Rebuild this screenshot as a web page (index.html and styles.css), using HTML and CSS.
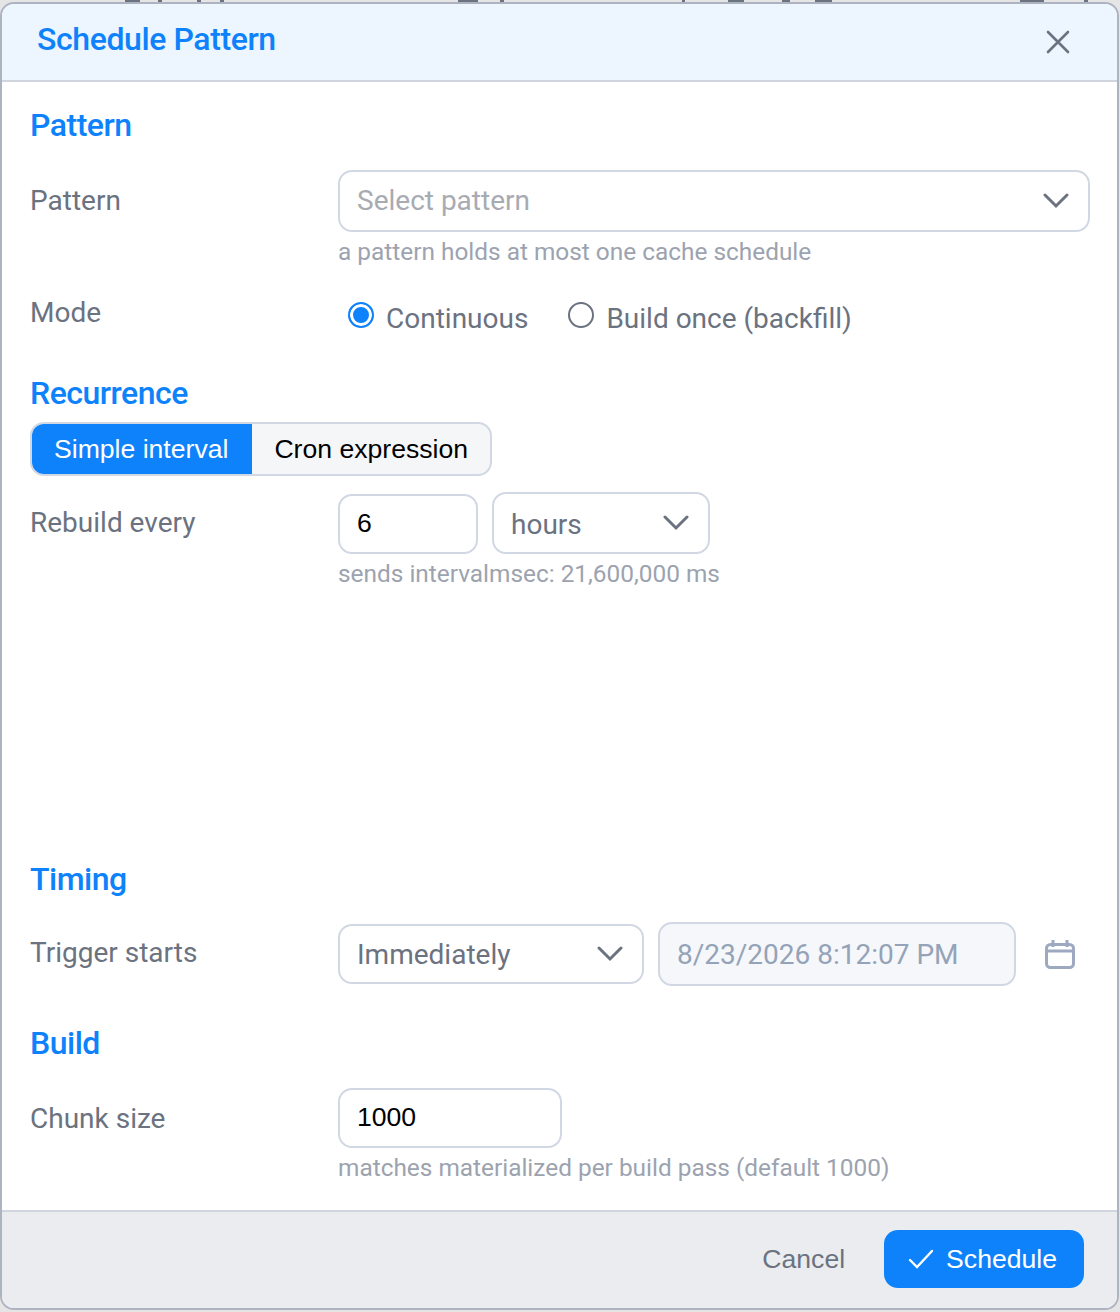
FILE: index.html
```html
<!DOCTYPE html>
<html lang="en">
<head>
    <meta charset="UTF-8">
    <meta name="viewport" content="width=device-width, initial-scale=1.0">
    <title>Schedule Pattern</title>
    <link rel="stylesheet" href="styles.css">
</head>
<body>
    <div class="dialog">
        <div class="dialog-header">
            <h1>Schedule Pattern</h1>
            <button class="close-btn" aria-label="Close">
                <svg width="24" height="24" viewBox="0 0 24 24"><path d="M2 2L22 22M22 2L2 22" stroke="#6b7280" stroke-width="2.6" fill="none" stroke-linecap="round"/></svg>
            </button>
        </div>

        <div class="dialog-body">
            <h2 class="section-title">Pattern</h2>
            <div class="row row-pattern">
                <label class="row-label">Pattern</label>
                <div class="row-field">
                    <div class="select select-full">
                        <span class="placeholder">Select pattern</span>
                        <svg class="chevron" width="26" height="16" viewBox="0 0 26 16"><path d="M2 2L13 13L24 2" stroke="#6b7280" stroke-width="3" fill="none" stroke-linecap="round"/></svg>
                    </div>
                    <p class="hint">a pattern holds at most one cache schedule</p>
                </div>
            </div>
            <div class="row row-mode">
                <label class="row-label">Mode</label>
                <div class="radios">
                    <span class="radio radio-on"></span>
                    <span class="radio-text">Continuous</span>
                    <span class="radio"></span>
                    <span class="radio-text">Build once (backfill)</span>
                </div>
            </div>

            <h2 class="section-title recurrence-title">Recurrence</h2>
            <div class="toggle">
                <span class="toggle-item toggle-active">Simple interval</span>
                <span class="toggle-item">Cron expression</span>
            </div>
            <div class="row row-rebuild">
                <label class="row-label">Rebuild every</label>
                <div class="row-field">
                    <div class="inline-fields inline-bottom">
                        <div class="input input-small">6</div>
                        <div class="select select-unit">
                            <span class="select-value">hours</span>
                            <svg class="chevron" width="26" height="16" viewBox="0 0 26 16"><path d="M2 2L13 13L24 2" stroke="#6b7280" stroke-width="3" fill="none" stroke-linecap="round"/></svg>
                        </div>
                    </div>
                    <p class="hint">sends intervalmsec: 21,600,000 ms</p>
                </div>
            </div>

            <h2 class="section-title timing-title">Timing</h2>
            <div class="row row-timing">
                <label class="row-label">Trigger starts</label>
                <div class="inline-fields">
                    <div class="select select-trigger">
                        <span class="select-value">Immediately</span>
                        <svg class="chevron" width="26" height="16" viewBox="0 0 26 16"><path d="M2 2L13 13L24 2" stroke="#6b7280" stroke-width="3" fill="none" stroke-linecap="round"/></svg>
                    </div>
                    <div class="date-input">8/23/2026 8:12:07 PM</div>
                    <svg class="calendar" width="30" height="29" viewBox="0 0 30 29" fill="none" stroke="#9ca9c0" stroke-width="3"><rect x="1.5" y="4.5" width="27" height="23" rx="4"/><path d="M2 11H28M8 0V7M22 0V7"/></svg>
                </div>
            </div>

            <h2 class="section-title build-title">Build</h2>
            <div class="row row-build">
                <label class="row-label">Chunk size</label>
                <div class="row-field">
                    <div class="input input-chunk">1000</div>
                    <p class="hint">matches materialized per build pass (default 1000)</p>
                </div>
            </div>
        </div>

        <div class="dialog-footer">
            <button class="btn-cancel">Cancel</button>
            <button class="btn-primary">
                <svg width="26" height="20" viewBox="0 0 26 20"><path d="M2 11L9 18L24 2" stroke="#fff" stroke-width="2.4" fill="none" stroke-linecap="round"/></svg>
                Schedule
            </button>
        </div>
    </div>
</body>
</html>
```

FILE: styles.css
```css
* {
    box-sizing: border-box;
}

html, body {
    height: 100%;
}

body {
    margin: 0;
    padding: 2px 1px 2px 0;
    background-color: #e5e5e5;
    /* bottoms of the table text left showing above the dialog */
    background-image: linear-gradient(90deg,
        transparent 125px, #6b7280 125px, #6b7280 140px, transparent 140px,
        transparent 158px, #6b7280 158px, #6b7280 162px, transparent 162px,
        transparent 197px, #6b7280 197px, #6b7280 201px, transparent 201px,
        transparent 220px, #6b7280 220px, #6b7280 224px, transparent 224px,
        transparent 458px, #6b7280 458px, #6b7280 478px, transparent 478px,
        transparent 500px, #6b7280 500px, #6b7280 504px, transparent 504px,
        transparent 682px, #6b7280 682px, #6b7280 685px, transparent 685px,
        transparent 728px, #6b7280 728px, #6b7280 744px, transparent 744px,
        transparent 782px, #6b7280 782px, #6b7280 790px, transparent 790px,
        transparent 815px, #6b7280 815px, #6b7280 832px, transparent 832px,
        transparent 1020px, #6b7280 1020px, #6b7280 1044px, transparent 1044px,
        transparent 1084px, #6b7280 1084px, #6b7280 1088px, transparent 1088px);
    background-size: 100% 2px;
    background-repeat: no-repeat;
    font-family: Roboto, sans-serif;
    overflow: hidden;
}

.dialog {
    height: 100%;
    display: flex;
    flex-direction: column;
    background: white;
    border: 2px solid #adb3c0;
    border-radius: 14px;
    overflow: hidden;
}

.dialog-header {
    height: 78px;
    flex: none;
    display: flex;
    align-items: center;
    justify-content: space-between;
    padding: 0 47px 0 35px;
    background-color: #edf5ff;
    border-bottom: 2px solid #d1d5e0;
}

.dialog-header h1 {
    margin: 0 0 6px;
    font-size: 32px;
    font-weight: 500;
    letter-spacing: -0.4px;
    color: #0d82fb;
}

.close-btn {
    display: flex;
    padding: 0;
    border: none;
    background: none;
}

.dialog-body {
    flex: 1;
    padding: 0 28px;
}

.section-title {
    margin: 0;
    padding-top: 24px;
    font-size: 32px;
    line-height: 38px;
    font-weight: 500;
    letter-spacing: -0.5px;
    color: #0d82fb;
}

.recurrence-title {
    padding-top: 0;
    margin-top: 36px;
}

.timing-title {
    padding-top: 0;
    margin-top: 269px;
}

.build-title {
    padding-top: 0;
    margin-top: 38px;
}

.row {
    display: flex;
    align-items: flex-start;
}

.row-label {
    flex: none;
    width: 308px;
    font-size: 28px;
    line-height: 32px;
    color: #6b7280;
}

.row-pattern {
    margin-top: 26px;
}

.row-pattern .row-label {
    margin-top: 15px;
}

.row-field {
    flex: 1;
}

.select,
.input,
.date-input {
    display: flex;
    align-items: center;
    justify-content: space-between;
    height: 60px;
    border: 2px solid #d1d8e4;
    border-radius: 14px;
    background: white;
    font-size: 28px;
}

.select {
    padding: 0 19px 0 17px;
    color: #6b7280;
}

.select-full {
    width: 752px;
    height: 62px;
}

.placeholder {
    color: #a8abb2;
    margin-bottom: 2px;
}

.hint {
    margin: 3px 0 0;
    font-size: 24.4px;
    line-height: 34px;
    color: #9ca3af;
}

.row-mode {
    margin-top: 25px;
}

.row-mode .row-label {
    margin-top: 3px;
}

.radios {
    display: flex;
    align-items: center;
    margin-top: 4px;
    padding-left: 10px;
    height: 40px;
    font-size: 28px;
    color: #6b7280;
}

.radio {
    width: 26px;
    height: 26px;
    margin-top: -6px;
    border: 2px solid #6b7280;
    border-radius: 50%;
    background: white;
}

.radio-on {
    border-color: #0d82fb;
    background: #0d82fb;
    box-shadow: inset 0 0 0 3px white;
}

.radio-text {
    margin-left: 12px;
    margin-right: 40px;
}

.toggle {
    display: inline-flex;
    margin-top: 10px;
    height: 54px;
    border: 2px solid #d1d8e4;
    border-radius: 14px;
    overflow: hidden;
    background-color: #f5f6f8;
    font-family: "Liberation Sans", Arial, sans-serif;
    font-size: 26.6px;
    color: black;
}

.toggle-item {
    display: flex;
    align-items: center;
    padding: 0 22px;
}

.toggle-active {
    padding-right: 24px;
    background-color: #0d82fb;
    color: white;
}

.row-rebuild {
    margin-top: 16px;
}

.row-rebuild .row-label {
    margin-top: 15px;
}

.inline-fields {
    display: flex;
    align-items: center;
    gap: 14px;
}

.inline-bottom {
    align-items: flex-end;
}

.input {
    justify-content: flex-start;
    padding: 0 17px 2px;
    font-family: "Liberation Sans", Arial, sans-serif;
    font-size: 26.6px;
    color: black;
}

.input-small {
    width: 140px;
}

.select-unit {
    width: 218px;
    height: 62px;
}

.select-unit .select-value {
    margin-top: 2px;
}

.row-timing {
    margin-top: 24px;
    align-items: center;
}

.row-timing .row-label {
    margin-bottom: 2px;
}

.select-trigger {
    width: 306px;
}

.date-input {
    width: 358px;
    height: 64px;
    padding: 0 17px;
    background-color: #f5f7fa;
    color: #94a3b8;
}

.calendar {
    margin-left: 15px;
}

.row-build {
    margin-top: 26px;
}

.row-build .row-label {
    margin-top: 15px;
}

.input-chunk {
    width: 224px;
}

.dialog-footer {
    height: 98px;
    flex: none;
    display: flex;
    align-items: center;
    justify-content: flex-end;
    gap: 39px;
    padding: 0 33px 2px 0;
    background-color: #ebecf0;
    border-top: 2px solid #d1d5e0;
}

.btn-cancel,
.btn-primary {
    border: none;
    font-family: "Liberation Sans", Arial, sans-serif;
    font-size: 26.6px;
}

.btn-cancel {
    padding: 0;
    background: none;
    color: #6b7280;
}

.btn-primary {
    display: flex;
    align-items: center;
    gap: 12px;
    height: 58px;
    padding: 0 27px 0 24px;
    border-radius: 14px;
    background-color: #0d82fb;
    color: white;
}
```
